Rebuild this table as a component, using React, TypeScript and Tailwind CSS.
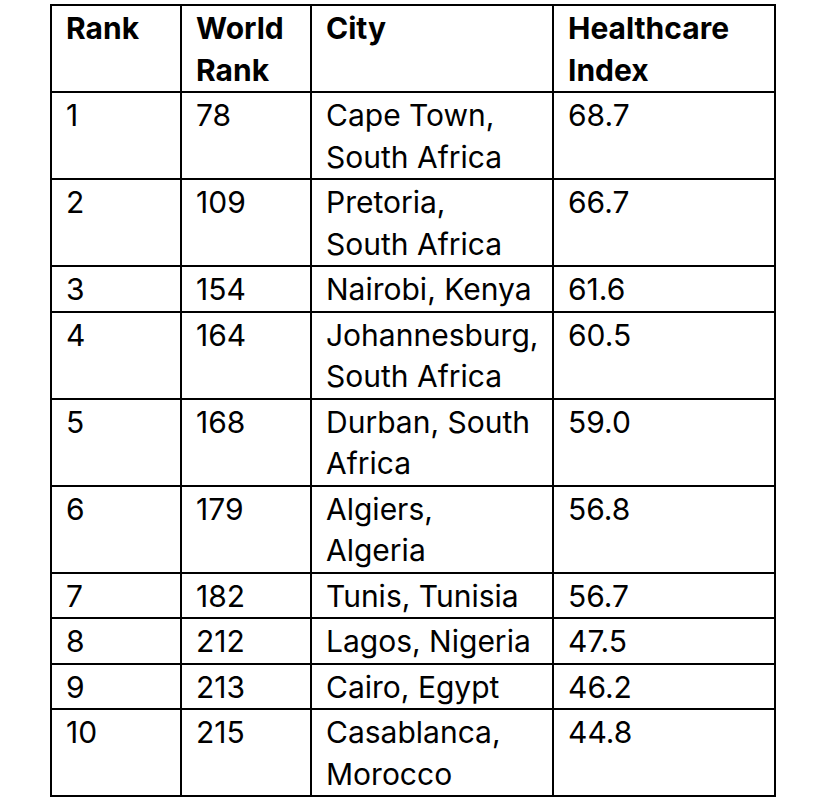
const headers: string[][] = [["Rank"], ["World", "Rank"], ["City"], ["Healthcare", "Index"]];

const rows: [string, string, string[], string][] = [
  ["1", "78", ["Cape Town,", "South Africa"], "68.7"],
  ["2", "109", ["Pretoria,", "South Africa"], "66.7"],
  ["3", "154", ["Nairobi, Kenya"], "61.6"],
  ["4", "164", ["Johannesburg,", "South Africa"], "60.5"],
  ["5", "168", ["Durban, South", "Africa"], "59.0"],
  ["6", "179", ["Algiers,", "Algeria"], "56.8"],
  ["7", "182", ["Tunis, Tunisia"], "56.7"],
  ["8", "212", ["Lagos, Nigeria"], "47.5"],
  ["9", "213", ["Cairo, Egypt"], "46.2"],
  ["10", "215", ["Casablanca,", "Morocco"], "44.8"],
];

function Lines({ lines }: { lines: string[] }) {
  return (
    <>
      {lines.map((l, i) => (
        <div key={i}>{l}</div>
      ))}
    </>
  );
}

const cell = "whitespace-nowrap border-b-2 border-r-2 border-black pl-[14px] pt-[2px]";

export default function App() {
  return (
    <div className="min-h-[800px] w-[828px] bg-white pt-[4px] pl-[50px]">
      <div
        className="grid w-[726px] grid-cols-[130px_130px_242px_222px] border-l-2 border-t-2 border-black text-[30px] leading-[41.5px] text-black"
        style={{ fontFamily: "Inter, 'Liberation Sans', sans-serif" }}
      >
        {headers.map((h, i) => (
          <div key={i} className={`${cell} font-bold`}>
            <Lines lines={h} />
          </div>
        ))}
        {rows.map(([rank, world, city, index]) => (
          <div key={rank} className="contents">
            <div className={cell}>{rank}</div>
            <div className={cell}>{world}</div>
            <div className={cell}>
              <Lines lines={city} />
            </div>
            <div className={cell}>{index}</div>
          </div>
        ))}
      </div>
    </div>
  );
}
